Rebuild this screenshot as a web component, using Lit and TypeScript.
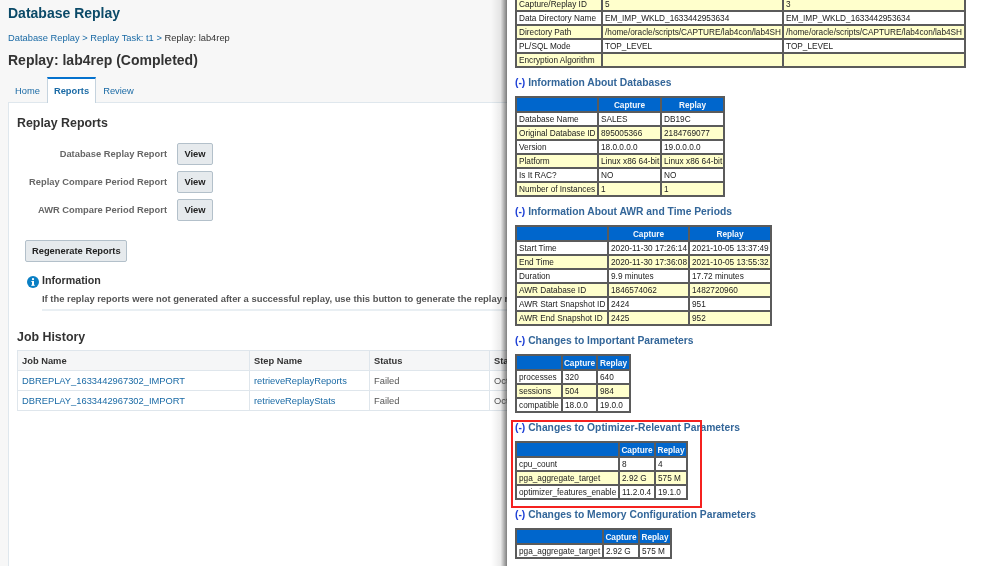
import { LitElement, html, css } from "lit";
import { customElement } from "lit/decorators.js";

interface ReportTable {
  title?: string;
  cols: number[];
  head?: string[];
  rows: string[][];
}

const reportTables: ReportTable[] = [
  {
    cols: [84, 179, 180],
    rows: [
      ["Capture/Replay ID", "5", "3"],
      ["Data Directory Name", "EM_IMP_WKLD_1633442953634", "EM_IMP_WKLD_1633442953634"],
      ["Directory Path", "/home/oracle/scripts/CAPTURE/lab4con/lab4SH", "/home/oracle/scripts/CAPTURE/lab4con/lab4SH"],
      ["PL/SQL Mode", "TOP_LEVEL", "TOP_LEVEL"],
      ["Encryption Algorithm", "", ""],
    ],
  },
  {
    title: "Information About Databases",
    cols: [80, 61, 61],
    head: ["", "Capture", "Replay"],
    rows: [
      ["Database Name", "SALES", "DB19C"],
      ["Original Database ID", "895005366", "2184769077"],
      ["Version", "18.0.0.0.0", "19.0.0.0.0"],
      ["Platform", "Linux x86 64-bit", "Linux x86 64-bit"],
      ["Is It RAC?", "NO", "NO"],
      ["Number of Instances", "1", "1"],
    ],
  },
  {
    title: "Information About AWR and Time Periods",
    cols: [90, 79, 80],
    head: ["", "Capture", "Replay"],
    rows: [
      ["Start Time", "2020-11-30 17:26:14", "2021-10-05 13:37:49"],
      ["End Time", "2020-11-30 17:36:08", "2021-10-05 13:55:32"],
      ["Duration", "9.9 minutes", "17.72 minutes"],
      ["AWR Database ID", "1846574062", "1482720960"],
      ["AWR Start Snapshot ID", "2424", "951"],
      ["AWR End Snapshot ID", "2425", "952"],
    ],
  },
  {
    title: "Changes to Important Parameters",
    cols: [44, 33, 31],
    head: ["", "Capture", "Replay"],
    rows: [
      ["processes", "320", "640"],
      ["sessions", "504", "984"],
      ["compatible", "18.0.0", "19.0.0"],
    ],
  },
  {
    title: "Changes to Optimizer-Relevant Parameters",
    cols: [101, 34, 30],
    head: ["", "Capture", "Replay"],
    rows: [
      ["cpu_count", "8", "4"],
      ["pga_aggregate_target", "2.92 G", "575 M"],
      ["optimizer_features_enable", "11.2.0.4", "19.1.0"],
    ],
  },
  {
    title: "Changes to Memory Configuration Parameters",
    cols: [85, 34, 30],
    head: ["", "Capture", "Replay"],
    rows: [["pga_aggregate_target", "2.92 G", "575 M"]],
  },
];

@customElement("report-panel")
export class ReportPanel extends LitElement {
  static styles = css`
    :host {
      display: block;
      position: relative;
      flex: 1;
      min-width: 0;
      height: 566px;
      overflow: hidden;
      background: #fff;
      padding-left: 8px;
      box-sizing: border-box;
      font-family: "Liberation Sans", Arial, sans-serif;
    }
    .first {
      margin-top: -4px;
    }
    h3 {
      margin: 0;
      height: 28px;
      line-height: 30px;
      font-size: 10.3px;
      font-weight: bold;
      color: #336699;
      white-space: nowrap;
    }
    h3 .toggle {
      color: #1c3fd6;
    }
    table {
      border-collapse: separate;
      border-spacing: 2px;
      background: #5b5b5b;
      table-layout: fixed;
    }
    th,
    td {
      padding: 1px 0 0 2px;
      box-sizing: border-box;
      font-size: 8.25px;
      line-height: 11px;
      height: 12px;
      white-space: nowrap;
      overflow: hidden;
      background: #fff;
      color: #222;
      text-align: left;
      font-weight: normal;
    }
    th {
      padding: 1px 0 0;
      height: 13px;
      background: #0066cc;
      color: #f2f7fc;
      font-weight: bold;
      text-align: center;
    }
    tr.alt td {
      background: #ffffcc;
    }
    .callout {
      position: absolute;
      left: 4px;
      top: 420px;
      width: 191px;
      height: 88px;
      box-sizing: border-box;
      border: 2.5px solid #f5211f;
    }
  `;

  renderTable(t: ReportTable, first: boolean) {
    // total width includes the 2px spacing on either side of every column
    const total = t.cols.reduce((a, b) => a + b, 0) + (t.cols.length + 1) * 2;
    return html`
      ${t.title
        ? html`<h3><span class="toggle">(-)</span> ${t.title}</h3>`
        : null}
      <table class=${first ? "first" : ""} style="width:${total}px">
        <colgroup>
          ${t.cols.map((w) => html`<col style="width:${w}px" />`)}
        </colgroup>
        ${t.head
          ? html`<tr>${t.head.map((h) => html`<th>${h}</th>`)}</tr>`
          : null}
        ${t.rows.map(
          (r, i) => html`<tr class=${(first ? i % 2 === 0 : i % 2 === 1) ? "alt" : ""}>
            ${r.map((c) => html`<td>${c}</td>`)}
          </tr>`
        )}
      </table>
    `;
  }

  render() {
    return html`
      ${reportTables.map((t, i) => this.renderTable(t, i === 0))}
      <div class="callout"></div>
    `;
  }
}

@customElement("app-root")
export class AppRoot extends LitElement {
  static styles = css`
    :host {
      display: flex;
      width: 990px;
      height: 566px;
      overflow: hidden;
      font-family: "Liberation Sans", Arial, sans-serif;
      filter: blur(0.3px);
    }
    .page {
      position: relative;
      width: 507px;
      height: 566px;
      flex: none;
      overflow: hidden;
      background: #f7f7f7;
      padding: 5px 0 0 8px;
      box-sizing: border-box;
      white-space: nowrap;
    }
    .page::after {
      content: "";
      position: absolute;
      top: 0;
      right: 0;
      bottom: 0;
      width: 16px;
      background: linear-gradient(to right, rgba(0, 0, 0, 0), rgba(0, 0, 0, 0.08) 60%, rgba(0, 0, 0, 0.5));
    }
    h1 {
      margin: 0;
      font-size: 14px;
      line-height: 16px;
      color: #0b4a68;
    }
    .crumbs {
      margin-top: 11px;
      font-size: 9.33px;
      line-height: 12px;
      color: #333;
    }
    .crumbs a,
    .link {
      color: #1a6aa5;
      text-decoration: none;
    }
    h2 {
      margin: 7px 0 0;
      font-size: 14px;
      line-height: 18px;
      color: #333;
    }
    .tabs {
      display: flex;
      margin-top: 8px;
      height: 25px;
      font-size: 9.33px;
    }
    .tab {
      padding: 0 7px;
      line-height: 28px;
      color: #1a6aa5;
    }
    .tab.active {
      position: relative;
      padding: 0 6px;
      background: #fff;
      border: 1px solid #c5d3de;
      border-top: 2px solid #0572ce;
      border-bottom: none;
      font-weight: bold;
      line-height: 25px;
      height: 26px;
      box-sizing: border-box;
      z-index: 1;
    }
    .body {
      background: #fff;
      border-left: 1px solid #dfe7ed;
      border-top: 1px solid #dfe7ed;
      height: 470px;
      padding: 12px 0 0 8px;
    }
    .section {
      margin: 0;
      font-size: 12.4px;
      line-height: 16px;
      font-weight: bold;
      color: #333;
    }
    .reports {
      display: grid;
      grid-template-columns: 150px auto;
      justify-content: start;
      column-gap: 10px;
      row-gap: 6px;
      margin-top: 12px;
      align-items: center;
    }
    .reports label {
      text-align: right;
      font-size: 9.33px;
      font-weight: bold;
      color: #666;
    }
    button {
      height: 22px;
      padding: 0 6px;
      font-family: inherit;
      font-size: 9.33px;
      font-weight: bold;
      color: #222;
      background: #e6eaed;
      border: 1px solid #b3c0ca;
      border-radius: 2px;
    }
    .reports button {
      width: 36px;
    }
    .regen {
      display: block;
      width: 102px;
      margin: 19px 0 0 8px;
    }
    .info {
      display: flex;
      gap: 3px;
      margin: 11px 0 0 10px;
    }
    .info svg {
      flex: none;
      margin-top: 3px;
    }
    .info strong {
      display: block;
      font-size: 10.7px;
      line-height: 14px;
      color: #333;
      font-weight: bold;
    }
    .info p {
      margin: 6px 0 0;
      padding-bottom: 4px;
      width: 465px;
      overflow: hidden;
      font-size: 9.4px;
      line-height: 12px;
      font-weight: bold;
      color: #555;
      border-bottom: 2px solid #e9eff3;
    }
    .job-title {
      margin-top: 18px;
    }
    .jobs {
      margin-top: 5px;
      border-collapse: collapse;
      table-layout: fixed;
      width: 490px;
      font-size: 9.33px;
    }
    .jobs th,
    .jobs td {
      border: 1px solid #dfe6ec;
      padding: 0 0 0 4px;
      text-align: left;
      color: #555;
      height: 19px;
      overflow: hidden;
    }
    .jobs th {
      background: #f5f6f7;
      color: #333;
      height: 19px;
    }
    .jobs td .link {
      color: #1a6aa5;
    }
    .panel-wrap {
      flex: 1;
      min-width: 0;
      display: flex;
    }
  `;

  render() {
    const jobs = [
      ["DBREPLAY_1633442967302_IMPORT", "retrieveReplayReports"],
      ["DBREPLAY_1633442967302_IMPORT", "retrieveReplayStats"],
    ];
    return html`
      <div class="page">
        <h1>Database Replay</h1>
        <div class="crumbs">
          <a>Database Replay</a> <a>&gt;</a> <a>Replay Task: t1</a> <a>&gt;</a> Replay: lab4rep
        </div>
        <h2>Replay: lab4rep (Completed)</h2>
        <div class="tabs">
          <div class="tab">Home</div>
          <div class="tab active">Reports</div>
          <div class="tab">Review</div>
        </div>
        <div class="body">
          <h4 class="section">Replay Reports</h4>
          <div class="reports">
            <label>Database Replay Report</label><button>View</button>
            <label>Replay Compare Period Report</label><button>View</button>
            <label>AWR Compare Period Report</label><button>View</button>
          </div>
          <button class="regen">Regenerate Reports</button>
          <div class="info">
            <svg width="12" height="12" viewBox="0 0 12 12">
              <circle cx="6" cy="6" r="6" fill="#0a7fc4"></circle>
              <rect x="5" y="5" width="2" height="4.4" fill="#fff"></rect>
              <rect x="4.2" y="8.8" width="3.6" height="0.9" fill="#fff"></rect>
              <rect x="4.2" y="5" width="1.2" height="0.8" fill="#fff"></rect>
              <circle cx="6" cy="3.2" r="1.1" fill="#fff"></circle>
            </svg>
            <div>
              <strong>Information</strong>
              <p>If the replay reports were not generated after a successful replay, use this button to generate the replay reports.</p>
            </div>
          </div>
          <h4 class="section job-title">Job History</h4>
          <table class="jobs">
            <colgroup>
              <col style="width:232px" />
              <col style="width:120px" />
              <col style="width:120px" />
              <col style="width:18px" />
            </colgroup>
            <tr><th>Job Name</th><th>Step Name</th><th>Status</th><th>Start Time</th></tr>
            ${jobs.map(
              (j) => html`<tr>
                <td><span class="link">${j[0]}</span></td>
                <td><span class="link">${j[1]}</span></td>
                <td>Failed</td>
                <td>Oct 5, 2021</td>
              </tr>`
            )}
          </table>
        </div>
      </div>
      <div class="panel-wrap"><report-panel></report-panel></div>
    `;
  }
}
